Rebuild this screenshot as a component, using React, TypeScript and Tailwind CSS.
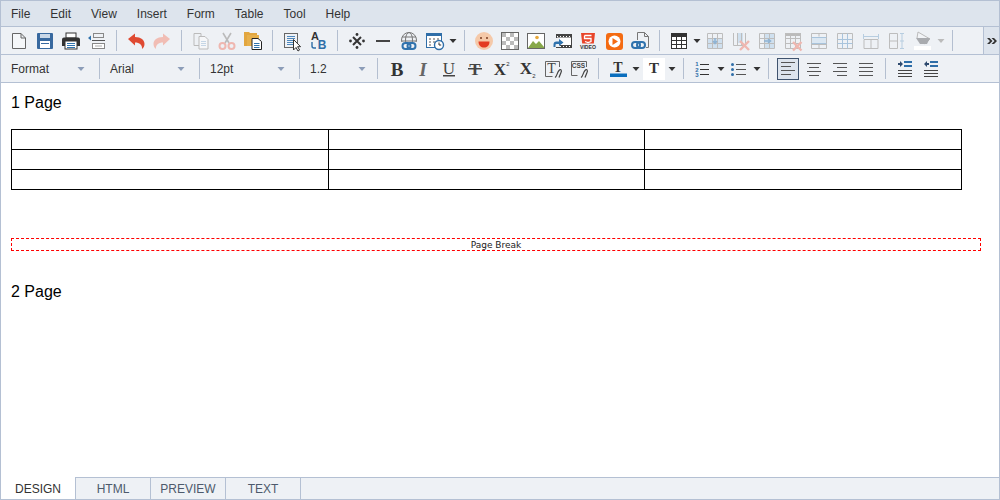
import type { ReactNode } from 'react'

const SERIF = '"Liberation Serif", serif'
const SANS = '"Liberation Sans", sans-serif'

function Ico({ children }: { children: ReactNode }) {
  return (
    <svg width="22" height="22" viewBox="0 0 22 22" className="block shrink-0">
      {children}
    </svg>
  )
}

function Cell({ children }: { children: ReactNode }) {
  return (
    <div className="w-[26px] h-[22px] shrink-0 flex items-center justify-center">
      <Ico>{children}</Ico>
    </div>
  )
}

function Sep() {
  return <div className="w-px h-[21px] mx-[6px] shrink-0 bg-[#b4bfd0]" />
}

function Caret({ color = '#333' }: { color?: string }) {
  return (
    <svg width="10" height="6" viewBox="0 0 10 6" className="block shrink-0">
      <path d="M1.500 1h7L5 5z" fill={color} />
    </svg>
  )
}

function SelectBox({ label, width }: { label: string; width: string }) {
  return (
    <div className={`${width} h-[27px] shrink-0 flex items-center justify-between pl-[10px] text-[12px] text-[#333]`}>
      <span>{label}</span>
      <Caret color="#8c9db8" />
    </div>
  )
}

function Lines({ ys, x1 = 4, x2 = 18, color = '#555' }: { ys: number[]; x1?: number; x2?: number; color?: string }) {
  return (
    <>
      {ys.map((y) => (
        <line key={y} x1={x1} x2={x2} y1={y} y2={y} stroke={color} strokeWidth="1" />
      ))}
    </>
  )
}

function LinkGlyph({ x, y }: { x: number; y: number }) {
  return (
    <g transform={`translate(${x} ${y})`} fill="none" stroke="#2f72ad" strokeWidth="2">
      <rect x="1" y="1" width="8" height="6" rx="3" />
      <rect x="6" y="1" width="8" height="6" rx="3" />
    </g>
  )
}

function GridIcon({ hl, x, head }: { hl?: string; x?: boolean; head?: boolean }) {
  return (
    <>
      {hl && <path d={hl} fill="#cfe0ef" />}
      {head && <rect x="3" y="3" width="16" height="3" fill="#bbb" />}
      <path d="M3.500 3.500h15v15h-15zM3.500 8.500h15M3.500 13.500h15M8.500 3.500v15M13.500 3.500v15" fill="none" stroke="#bdbdbd" />
      {x && <path d="M11 12l8.500 8.500M19.500 12L11 20.500" stroke="#efb7b0" strokeWidth="2.400" />}
    </>
  )
}

function ScriptT() {
  return <path d="M13 19.500c2-1 2-5 4-7s3 0 2 2l-2 5" fill="none" stroke="#444" strokeWidth="1.200" />
}

export default function App() {
  return (
    <div className="w-[1000px] h-[500px] flex flex-col border-x border-[#b4c0d3] bg-white font-['Liberation_Sans',sans-serif] overflow-hidden">
      <div className="h-[27px] shrink-0 flex items-center bg-[#dde4ed] border-y border-[#b4c0d3] text-[12px] text-[#333]">
        {['File', 'Edit', 'View', 'Insert', 'Form', 'Table', 'Tool', 'Help'].map((m) => (
          <span key={m} className="px-[10px]">{m}</span>
        ))}
      </div>

      <div className="h-[28px] shrink-0 flex items-center pl-[5px] bg-[#eef1f5] border-b border-[#b4c0d3]">
        <Cell>
          <path d="M4.500 3.500H13L17.500 8V18.500H4.500zM13 3.500V8H17.500" fill="#f5f7f9" stroke="#666" />
        </Cell>
        <Cell>
          <rect x="3" y="3" width="16" height="16" rx="1" fill="#38699f" />
          <rect x="6" y="4" width="10" height="4" fill="#c9d8e8" />
          <rect x="6" y="11" width="10" height="7" fill="#fff" />
          <rect x="7" y="13" width="8" height="1" fill="#38699f" />
        </Cell>
        <Cell>
          <rect x="6" y="3" width="10" height="5" fill="#fff" stroke="#333" />
          <path d="M2 9.500a2 2 0 0 1 2-2h14a2 2 0 0 1 2 2V16H2z" fill="#333" />
          <rect x="5" y="11" width="12" height="8" fill="#fff" stroke="#333" />
          <Lines ys={[13.500, 15.500, 17.500]} x1={7} x2={15} color="#2f72ad" />
        </Cell>
        <Cell>
          <path d="M2 8l3-2.500v5z" fill="#2f72ad" />
          <path d="M7 3.500h11M7 7.500h11M7.500 3v5M17.500 3v5" fill="none" stroke="#888" />
          <Lines ys={[10.500]} x1={6} x2={19} color="#555" />
          <rect x="6.500" y="13.500" width="12" height="5" fill="#fff" stroke="#888" />
          <Lines ys={[16]} x1={9} x2={16} color="#aaa" />
        </Cell>
        <Sep />
        <Cell>
          <path d="M3 9L10 3.500V7C16 7 19.500 10 19.500 14C19.500 16 18.500 18 17 19C17.500 15 14.500 12.500 10 12.500V15.500Z" fill="#df4a32" />
        </Cell>
        <Cell>
          <path d="M19 9L12 3.500V7C6 7 2.500 10 2.500 14C2.500 16 3.500 18 5 19C4.500 15 7.500 12.500 12 12.500V15.500Z" fill="#f1bdb4" />
        </Cell>
        <Sep />
        <Cell>
          <path d="M4 3.500h7v12H4z" fill="#eef1f5" stroke="#bbb" />
          <path d="M9 6.500h6l3 3v9.500H9z" fill="#f6f7f9" stroke="#bbb" />
          <Lines ys={[11.500, 13.500, 15.500]} x1={11} x2={16} color="#c5d6e6" />
        </Cell>
        <Cell>
          <path d="M7 3l6 10M15 3l-6 10" stroke="#bbb" strokeWidth="1.600" />
          <circle cx="6.500" cy="16" r="3" fill="none" stroke="#efb7b0" strokeWidth="2" />
          <circle cx="15.500" cy="16" r="3" fill="none" stroke="#efb7b0" strokeWidth="2" />
        </Cell>
        <Cell>
          <path d="M2 2h5l1 1h7v3H5v10H2z" fill="#e2a63f" />
          <rect x="5" y="5" width="12" height="11" fill="#e7b04c" />
          <path d="M10 8.500h6l3.500 3V19.500H10z" fill="#fff" stroke="#222" />
          <Lines ys={[13.500, 15.500, 17.500]} x1={12} x2={17.500} color="#2f72ad" />
        </Cell>
        <Sep />
        <Cell>
          <rect x="3.500" y="3.500" width="13" height="14" fill="#eef1f5" stroke="#666" />
          <Lines ys={[6.500, 8.500, 10.500, 12.500, 14.500]} x1={6} x2={14} color="#4d87bd" />
          <path d="M12.500 9.500V20l2.500-2.500 2 3.500 1.600-1-2-3.300h3z" fill="#fff" stroke="#333" />
        </Cell>
        <Cell>
          <text x="8" y="10" fontFamily={SANS} fontWeight="700" fontSize="11" fill="#333" textAnchor="middle">A</text>
          <text x="15" y="18.500" fontFamily={SANS} fontWeight="700" fontSize="12" fill="#2f6ea8" textAnchor="middle">B</text>
          <path d="M5 12v4q0 2 2 2h2" fill="none" stroke="#2f6ea8" strokeWidth="1.400" />
        </Cell>
        <Sep />
        <Cell>
          <path d="M7 7l8 8M15 7l-8 8" stroke="#333" strokeWidth="2" />
          <circle cx="4.500" cy="11" r="1.400" fill="#333" />
          <circle cx="17.500" cy="11" r="1.400" fill="#333" />
          <circle cx="11" cy="4.500" r="1.400" fill="#333" />
          <circle cx="11" cy="17.500" r="1.400" fill="#333" />
        </Cell>
        <Cell>
          <rect x="4" y="10" width="14" height="2" fill="#444" />
        </Cell>
        <Cell>
          <circle cx="11" cy="10" r="7.500" fill="none" stroke="#777" />
          <ellipse cx="11" cy="10" rx="3.500" ry="7.500" fill="none" stroke="#777" />
          <path d="M4 7h14M3.500 11h15" stroke="#777" />
          <rect x="3" y="12" width="16" height="8" fill="#eef1f5" />
          <LinkGlyph x={3.500} y={12} />
        </Cell>
        <Cell>
          <rect x="2.500" y="3.500" width="15" height="14" fill="#fff" stroke="#2f6ea8" />
          <rect x="2" y="3" width="16" height="3" fill="#2f6ea8" />
          <path d="M5 9h2M9 9h2M13 9h2M5 12h2M9 12h2M5 15h2" stroke="#555" />
          <circle cx="15" cy="15" r="4.500" fill="#fff" stroke="#2f6ea8" strokeWidth="1.400" />
          <path d="M15 12.500V15h2.200" fill="none" stroke="#333" />
        </Cell>
        <Caret />
        <Sep />
        <Cell>
          <circle cx="11" cy="11" r="9" fill="#f5c9a9" />
          <circle cx="8" cy="8" r="1" fill="#7a3b20" />
          <circle cx="14" cy="8" r="1" fill="#7a3b20" />
          <path d="M5.500 11.500h11c0 4-2.500 6-5.500 6s-5.500-2-5.500-6z" fill="#e33b22" />
        </Cell>
        <Cell>
          <rect x="3" y="3" width="16" height="16" fill="#fff" />
          <path d="M3 3h4v4H3zM11 3h4v4h-4zM7 7h4v4H7zM15 7h4v4h-4zM3 11h4v4H3zM11 11h4v4h-4zM7 15h4v4H7zM15 15h4v4h-4z" fill="#bbb" />
          <rect x="2.500" y="2.500" width="17" height="17" fill="none" stroke="#666" />
        </Cell>
        <Cell>
          <rect x="2.500" y="3.500" width="17" height="15" fill="#fff" stroke="#666" />
          <path d="M3 18l5-7 3 3 3-3 5 6v1z" fill="#87a84a" />
          <circle cx="12" cy="7.500" r="1.800" fill="#e7a93c" />
        </Cell>
        <Cell>
          <rect x="5.500" y="4.500" width="15" height="13" fill="#fff" stroke="#444" />
          <path d="M5 5h16v2.500H5zM5 15h16v3H5z" fill="#444" />
          <path d="M6 6.500h1M9 6.500h1M12 6.500h1M15 6.500h1M18 6.500h1M6 16.500h1M9 16.500h1M12 16.500h1M15 16.500h1M18 16.500h1" stroke="#fff" />
          <rect x="0" y="8" width="9" height="9" fill="#eef1f5" />
          <path d="M2.500 17v-2.500a3 3 0 0 1 3-3H8V9l4.500 3.500L8 16v-2H5.500a1 1 0 0 0-1 1v2z" fill="#2f72ad" />
        </Cell>
        <Cell>
          <path d="M4 3h14l-1.200 10.500H5.200z" fill="#e8452a" />
          <path d="M7.500 5.500h7M7.500 5.500v3h6.500v3l-3 1-3-1" fill="none" stroke="#fff" strokeWidth="1.300" />
          <text x="11" y="19" textAnchor="middle" fontFamily={SANS} fontWeight="700" fontSize="6" textLength="16" lengthAdjust="spacingAndGlyphs" fill="#333">VIDEO</text>
        </Cell>
        <Cell>
          <rect x="3" y="3" width="17" height="17" rx="3" fill="#f46b12" />
          <circle cx="11.500" cy="11.500" r="6" fill="#fff" />
          <path d="M9.500 8l5.500 3.500-5.500 3.500z" fill="#f46b12" />
        </Cell>
        <Cell>
          <path d="M8.500 10V2.500H15.500L19.500 6.500V17.500H17" fill="none" stroke="#777" />
          <path d="M15.500 2.500V6.500H19.500" fill="none" stroke="#777" />
          <LinkGlyph x={2} y={11} />
        </Cell>
        <Sep />
        <Cell>
          <rect x="3.500" y="3.500" width="15" height="15" fill="#fff" stroke="#333" />
          <rect x="3" y="3" width="16" height="4" fill="#333" />
          <path d="M3.500 10.500h15M3.500 14.500h15M8.500 7v11M13.500 7v11" stroke="#333" />
        </Cell>
        <Caret />
        <Cell>
          <GridIcon hl="M4 9h14v9H4z" />
          <path d="M11 8v5M9 11l2 2.500 2-2.500" fill="none" stroke="#8fb3d3" strokeWidth="1.500" />
        </Cell>
        <Cell>
          <path d="M7 3v10h6V3z" fill="#cfe0ef" />
          <path d="M3.500 3v12.500h12V3M7.500 3v12M11.500 3v12" fill="none" stroke="#bdbdbd" />
          <path d="M10 11l9 9M19 11l-9 9" stroke="#efb7b0" strokeWidth="2.400" />
        </Cell>
        <Cell>
          <GridIcon hl="M9 4h9v14H9z" />
          <path d="M8 11h6M12 9l2.500 2-2.500 2" fill="none" stroke="#8fb3d3" strokeWidth="1.500" />
        </Cell>
        <Cell>
          <GridIcon head x />
        </Cell>
        <Cell>
          <path d="M3.500 3.500h15v15h-15zM3.500 14.500h15M11 3.500v3M11 14.500v4" fill="none" stroke="#bdbdbd" />
          <rect x="4" y="7.500" width="14" height="6" fill="#dbe7f2" />
          <path d="M3.500 7.500h15M3.500 13.500h15" stroke="#a9c4dc" />
        </Cell>
        <Cell>
          <path d="M3.500 3.500h15v15h-15z" fill="none" stroke="#bdbdbd" />
          <path d="M3.500 9.500h15M3.500 13.500h15M8.500 3.500v15M13.500 3.500v15" stroke="#a9c4dc" />
        </Cell>
        <Cell>
          <path d="M3.500 4v5M18.500 4v5M3.500 6.500h15" fill="none" stroke="#b7cde0" />
          <path d="M4 9.500h14v9H4zM11 9.500v9" fill="none" stroke="#bdbdbd" />
        </Cell>
        <Cell>
          <path d="M3.500 3.500h8v15h-8zM3.500 11h8" fill="none" stroke="#bdbdbd" />
          <path d="M16 3v16M14 3.500h4M14 18.500h4M14 11h4" fill="none" stroke="#b7cde0" />
        </Cell>
        <Cell>
          <path d="M6 2l12 7-5 5-8-6z" fill="#f2f4f7" stroke="#bbb" />
          <path d="M4 8h14l-3 6H8z" fill="#a9abaf" />
          <rect x="2" y="16" width="17" height="4" fill="#fff" />
        </Cell>
        <Caret color="#bbb" />
        <Sep />
        <div className="ml-auto w-[16px] h-full flex items-center justify-center bg-[#dde4ed] border-l border-[#b4c0d3]">
          <svg width="10" height="6" viewBox="0 0 10 6" className="block">
            <path d="M0 0l3 3-3 3h2.500l3-3-3-3zM4.500 0l3 3-3 3H7l3-3-3-3z" fill="#333" />
          </svg>
        </div>
      </div>

      <div className="h-[28px] shrink-0 flex items-center bg-[#eef1f5] border-b border-[#b4c0d3]">
        <div className="w-[98px] pr-[13px]"><SelectBox label="Format" width="w-full" /></div>
        <div className="w-px h-[21px] shrink-0 bg-[#b4bfd0]" />
        <div className="w-[99px] pr-[13px]"><SelectBox label="Arial" width="w-full" /></div>
        <div className="w-px h-[21px] shrink-0 bg-[#b4bfd0]" />
        <div className="w-[99px] pr-[13px]"><SelectBox label="12pt" width="w-full" /></div>
        <div className="w-px h-[21px] shrink-0 bg-[#b4bfd0]" />
        <div className="w-[71px] pr-[4px]"><SelectBox label="1.2" width="w-full" /></div>
        <Sep />
        <Cell>
          <text x="11" y="17.500" textAnchor="middle" fontFamily={SERIF} fontWeight="700" fontSize="19" fill="#333">B</text>
        </Cell>
        <Cell>
          <text x="11" y="17.500" textAnchor="middle" fontFamily={SERIF} fontStyle="italic" fontWeight="700" fontSize="19" fill="#666">I</text>
        </Cell>
        <Cell>
          <text x="11" y="15.500" textAnchor="middle" fontFamily={SERIF} fontSize="17" fill="#444">U</text>
          <rect x="5" y="17" width="12" height="1.500" fill="#444" />
        </Cell>
        <Cell>
          <text x="11" y="17" textAnchor="middle" fontFamily={SERIF} fontWeight="700" fontSize="17" fill="#444">T</text>
          <rect x="4" y="10" width="14" height="1.500" fill="#444" />
        </Cell>
        <Cell>
          <text x="10" y="16.500" textAnchor="middle" fontFamily={SERIF} fontWeight="700" fontSize="17" fill="#333">X</text>
          <text x="18" y="8" textAnchor="middle" fontFamily={SANS} fontSize="6" fill="#333">2</text>
        </Cell>
        <Cell>
          <text x="10" y="16" textAnchor="middle" fontFamily={SERIF} fontWeight="700" fontSize="17" fill="#333">X</text>
          <text x="18" y="19.500" textAnchor="middle" fontFamily={SANS} fontSize="6" fill="#333">2</text>
        </Cell>
        <Cell>
          <path d="M17.500 9V3.500h-14v15h7" fill="none" stroke="#666" />
          <text x="9.500" y="15" textAnchor="middle" fontFamily={SERIF} fontSize="14" fill="#444">T</text>
          <ScriptT />
        </Cell>
        <Cell>
          <path d="M18.500 9V3.500h-15v14h6" fill="none" stroke="#666" />
          <text x="10.500" y="10" textAnchor="middle" fontFamily={SANS} fontWeight="700" fontSize="6.500" fill="#444">CSS</text>
          <ScriptT />
        </Cell>
        <Sep />
        <Cell>
          <text x="11" y="13.500" textAnchor="middle" fontFamily={SERIF} fontWeight="700" fontSize="14" fill="#333">T</text>
          <rect x="3" y="15.500" width="17" height="3.500" fill="#0a6ebd" />
        </Cell>
        <Caret />
        <div className="w-[22px] h-[22px] mx-[2px] shrink-0 flex items-center justify-center bg-white">
          <span className="font-['Liberation_Serif',serif] font-bold text-[15px] text-[#333]">T</span>
        </div>
        <Caret />
        <Sep />
        <Cell>
          <text x="5" y="8" textAnchor="middle" fontFamily={SANS} fontWeight="700" fontSize="6" fill="#2f6ea8">1</text>
          <text x="5" y="13.500" textAnchor="middle" fontFamily={SANS} fontWeight="700" fontSize="6" fill="#2f6ea8">2</text>
          <text x="5" y="19" textAnchor="middle" fontFamily={SANS} fontWeight="700" fontSize="6" fill="#2f6ea8">3</text>
          <Lines ys={[6.500, 11.500, 16.500]} x1={8} x2={17} color="#333" />
        </Cell>
        <Caret />
        <Cell>
          <circle cx="4.500" cy="6.500" r="1.500" fill="#2f6ea8" />
          <circle cx="4.500" cy="11.500" r="1.500" fill="#2f6ea8" />
          <circle cx="4.500" cy="16.500" r="1.500" fill="#2f6ea8" />
          <Lines ys={[6.500, 11.500, 16.500]} x1={8} x2={18} color="#555" />
        </Cell>
        <Caret />
        <Sep />
        <div className="w-[22px] h-[22px] mx-[2px] shrink-0 flex items-center justify-center bg-[#dde4ed] border border-[#3f536e]">
          <svg width="20" height="20" viewBox="1 1 20 20" className="block shrink-0">
            <Lines ys={[4.500, 12.500]} x1={4} x2={18} color="#555" />
            <Lines ys={[8.500, 16.500]} x1={4} x2={14} color="#555" />
          </svg>
        </div>
        <Cell>
          <Lines ys={[5.500, 13.500]} x1={4} x2={18} color="#555" />
          <Lines ys={[9.500, 17.500]} x1={6} x2={16} color="#555" />
        </Cell>
        <Cell>
          <Lines ys={[5.500, 13.500]} x1={4} x2={18} color="#555" />
          <Lines ys={[9.500, 17.500]} x1={8} x2={18} color="#555" />
        </Cell>
        <Cell>
          <Lines ys={[5.500, 9.500, 13.500, 17.500]} x1={4} x2={18} color="#555" />
        </Cell>
        <Sep />
        <Cell>
          <path d="M4 5h2V3l3 3-3 3V7H4z" fill="#2f4a6e" />
          <rect x="10" y="3" width="8" height="2" fill="#2f6ea8" />
          <rect x="10" y="7" width="8" height="2" fill="#2f6ea8" />
          <Lines ys={[12.500, 15.500, 18.500]} x1={4} x2={18} color="#444" />
        </Cell>
        <Cell>
          <path d="M9 5H7V3L4 6l3 3V7h2z" fill="#2f4a6e" />
          <rect x="10" y="3" width="8" height="2" fill="#2f6ea8" />
          <rect x="10" y="7" width="8" height="2" fill="#2f6ea8" />
          <Lines ys={[12.500, 15.500, 18.500]} x1={4} x2={18} color="#444" />
        </Cell>
      </div>

      <div className="flex-1 min-h-0 pl-[10px] pt-[11px] text-[16px] leading-[18px] text-black">
        <p>1 Page</p>
        <table className="mt-[17px] w-[951px] table-fixed border-collapse">
          <tbody>
            {[0, 1, 2].map((r) => (
              <tr key={r} className="h-[20px]">
                <td className="border border-black p-0" />
                <td className="border border-black p-0" />
                <td className="border border-black p-0" />
              </tr>
            ))}
          </tbody>
        </table>
        <div className="mt-[48px] w-[970px] h-[13px] pt-[2px] border border-dashed border-[#f00] flex items-center justify-center font-['DejaVu_Sans',sans-serif] text-[9px] leading-none text-[#222]">
          Page Break
        </div>
        <p className="mt-[32px]">2 Page</p>
      </div>

      <div className="h-[23px] shrink-0 flex bg-[#eef1f5] border-t border-b border-[#b4c0d3] text-[12px] text-[#4d5a6c]">
        <div className="w-[74px] -mt-px pt-px flex items-center justify-center bg-white text-[#333]">DESIGN</div>
        <div className="w-[75px] flex items-center justify-center border-l border-[#b4c0d3]">HTML</div>
        <div className="w-[75px] flex items-center justify-center border-l border-[#b4c0d3]">PREVIEW</div>
        <div className="w-[76px] flex items-center justify-center border-x border-[#b4c0d3]">TEXT</div>
      </div>
    </div>
  )
}
